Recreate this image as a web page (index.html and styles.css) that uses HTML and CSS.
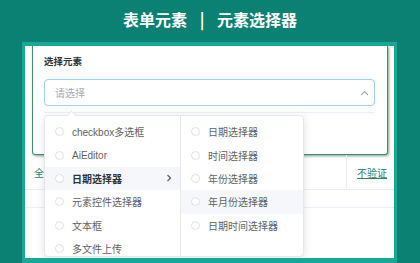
FILE: index.html
```html
<!DOCTYPE html>
<html lang="zh">

<head>
    <meta charset="UTF-8">
    <meta name="viewport" content="width=device-width, initial-scale=1.0">
    <title>元素选择器</title>
    <link rel="stylesheet" href="styles.css">
</head>

<body>
    <header class="top">
        <h1>表单元素<span class="sep">|</span>元素选择器</h1>
    </header>
    <div class="card">
        <div class="dialog">
            <div class="label">选择元素</div>
            <div class="select">
                <span>请选择</span>
                <svg width="9" height="6" viewBox="0 0 9 6"><polyline points="1,5 4.5,1.5 8,5" fill="none" stroke="#a8abb2" stroke-width="1.1"/></svg>
            </div>
            <div class="rule"></div>
        </div>
        <div class="row row-main">
            <div class="cell-grow"><span class="link">全选元素</span></div>
            <div class="cell-end"><a class="link under">不验证</a></div>
        </div>
        <div class="row row-thin"></div>

        <div class="cascader">
            <div class="pop-arrow"></div>
            <div class="menu menu-1">
                <div class="node"><span class="radio"></span>checkbox多选框</div>
                <div class="node"><span class="radio"></span>AiEditor</div>
                <div class="node active"><span class="radio"></span>日期选择器
                    <svg class="caret" width="6" height="8" viewBox="0 0 6 8"><polyline points="1.5,1 4.5,4 1.5,7" fill="none" stroke="#606266" stroke-width="1.3"/></svg>
                </div>
                <div class="node"><span class="radio"></span>元素控件选择器</div>
                <div class="node"><span class="radio"></span>文本框</div>
                <div class="node"><span class="radio"></span>多文件上传</div>
            </div>
            <div class="menu menu-2">
                <div class="node"><span class="radio"></span>日期选择器</div>
                <div class="node"><span class="radio"></span>时间选择器</div>
                <div class="node"><span class="radio"></span>年份选择器</div>
                <div class="node hover"><span class="radio"></span>年月份选择器</div>
                <div class="node"><span class="radio"></span>日期时间选择器</div>
            </div>
        </div>
    </div>
</body>

</html>
```

FILE: styles.css
```css
* {
    margin: 0;
    padding: 0;
    box-sizing: border-box;
}

body {
    width: 420px;
    height: 263px;
    overflow: hidden;
    background-color: #0b8174;
    font-family: "Liberation Sans", "Noto Sans CJK SC", sans-serif;
}

.top {
    height: 42px;
    padding-top: 8px;
    text-align: center;
}

.top h1 {
    font-family: "Noto Sans CJK SC", sans-serif;
    font-size: 16px;
    line-height: 22px;
    font-weight: bold;
    color: #fff;
}

.sep {
    display: inline-block;
    width: 30px;
    text-align: center;
}

.card {
    position: relative;
    height: 221px;
    margin: 0 23px 0 22px;
    background-color: #fff;
    border: solid #17a898;
    border-width: 4px 3px 5px;
    overflow: hidden;
}

.dialog {
    height: 109px;
    margin: 0 6px 0 7px;
    padding: 9px 12px 0 11px;
    border: 1px solid #3f8d6c;
    border-top: none;
    border-radius: 0 0 3px 3px;
    box-shadow: 1px 1px 3px rgba(10, 80, 50, 0.55);
}

.label {
    font-size: 9.5px;
    line-height: 14px;
    font-weight: bold;
    color: #303133;
}

.select {
    height: 27px;
    margin-top: 10px;
    padding: 0 5px 0 10px;
    display: flex;
    align-items: center;
    justify-content: space-between;
    border: 1.5px solid #a0cfff;
    border-radius: 4px;
    font-size: 10px;
    color: #a8abb2;
}

.rule {
    height: 1px;
    margin-top: 6px;
    background-color: #ebeef5;
}

.row {
    display: flex;
    border-bottom: 1px solid #ebeef5;
}

.row-main {
    height: 35px;
}

.row-thin {
    height: 18px;
}

.cell-grow {
    flex: 1;
    display: flex;
    align-items: center;
    padding-left: 9px;
}

.cell-end {
    width: 48px;
    display: flex;
    align-items: center;
    padding-left: 10px;
    border-left: 1px solid #ebeef5;
}

.link {
    font-size: 10px;
    color: #2e8168;
}

.under {
    text-decoration: underline;
}

.cascader {
    position: absolute;
    left: 19px;
    top: 69px;
    width: 260px;
    height: 142px;
    display: flex;
    background-color: #fff;
    border: 1px solid #e4e7ed;
    border-radius: 4px;
    box-shadow: 0 2px 8px rgba(0, 0, 0, 0.12);
}

.pop-arrow {
    position: absolute;
    left: 23px;
    top: -4px;
    width: 7px;
    height: 7px;
    background-color: #fff;
    border-left: 1px solid #e4e7ed;
    border-top: 1px solid #e4e7ed;
    transform: rotate(45deg);
}

.menu {
    padding-top: 4px;
    overflow: hidden;
}

.menu-1 {
    width: 135px;
}

.menu-2 {
    flex: 1;
    border-left: 1px solid #e4e7ed;
}

.node {
    height: 23.4px;
    padding: 0 8px 0 10px;
    display: flex;
    align-items: center;
    font-size: 10px;
    color: #606266;
    white-space: nowrap;
}

.node.active {
    background-color: #f5f7fa;
    color: #303133;
    font-weight: bold;
}

.node.hover {
    background-color: #f5f7fa;
}

.radio {
    width: 9px;
    height: 9px;
    margin-right: 8px;
    flex-shrink: 0;
    border: 1px solid #dcdfe6;
    border-radius: 50%;
    background-color: #fff;
}

.caret {
    margin-left: auto;
}
```
